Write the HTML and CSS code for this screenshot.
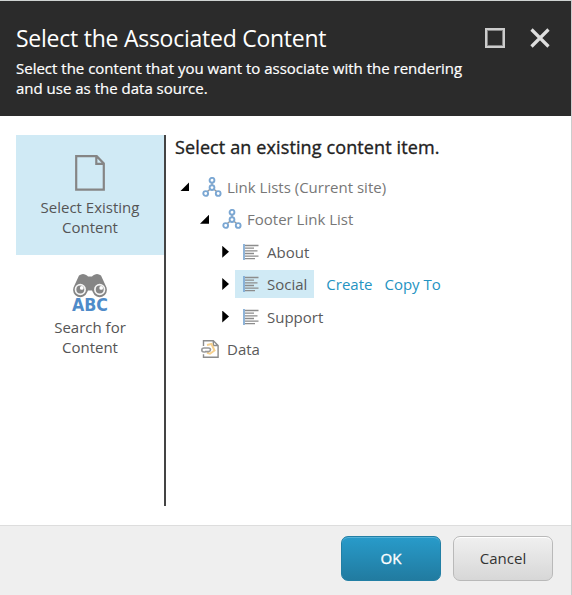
FILE: index.html
```html
<!DOCTYPE html>
<html lang="en">
<head>
<meta charset="utf-8">
<title>Select the Associated Content</title>
<link rel="stylesheet" href="styles.css">
</head>
<body>
<svg class="defs" aria-hidden="true">
  <symbol id="nodes" viewBox="0 0 20 20">
    <path d="M10 5v4M8.300 12l-3.200 2.700M11.700 12l3.200 2.700" fill="none" stroke="#999" stroke-width="1.500"/>
    <g fill="#fff" stroke="#7ba7d3" stroke-width="1.900">
      <circle cx="10" cy="3.300" r="2.400"/><circle cx="10" cy="10.600" r="2.400"/>
      <circle cx="3.700" cy="16.500" r="2.400"/><circle cx="16.200" cy="16.500" r="2.400"/>
    </g>
  </symbol>
  <symbol id="list" viewBox="0 0 16 16">
    <path d="M1 0v16" stroke="#7ba7d3" stroke-width="1.700"/>
    <path d="M2 1.500h13.500M2 4.200h9M2 6.800h12.500M2 9.500h9M2 12.100h13.500M2 14.700h10" stroke="#8c8c8c" stroke-width="1.300"/>
  </symbol>
</svg>
<div class="dialog">
  <header class="header">
    <div>
      <h1 class="title">Select the Associated Content</h1>
      <p class="subtitle">Select the content that you want to associate with the rendering<br>and use as the data source.</p>
    </div>
    <div class="controls">
      <span class="maximize"></span>
      <svg class="close" width="20" height="20" viewBox="0 0 20 20"><path d="M1.500 1.500l17 17M18.500 1.500l-17 17" stroke="#dedede" stroke-width="3.200"/></svg>
    </div>
  </header>
  <main class="body">
    <nav class="tabs">
      <div class="tab active">
        <svg width="30" height="36" viewBox="0 0 30 36"><path d="M1.200 1.200h20.500l7.100 7.300v26.100H1.200zM21.300 1.200v7.700h7.500" fill="none" stroke="#858585" stroke-width="2.200"/></svg>
        <span>Select Existing<br>Content</span>
      </div>
      <div class="tab search">
        <svg width="38" height="38" viewBox="0 0 38 38">
          <path d="M8 2.500q4-3 8 0l1 1h4l1-1q4-3 8 0l5.500 12a7 7 0 1 1-13.500 5l-1-2h-4l-1 2A7 7 0 1 1 2.500 14.500z" fill="#858585"/>
          <circle cx="9.300" cy="16.500" r="4.800" fill="#858585" stroke="#f5f5f5" stroke-width="1.700"/><circle cx="28.700" cy="16.500" r="4.800" fill="#858585" stroke="#f5f5f5" stroke-width="1.700"/>
          <circle cx="10.800" cy="14.900" r="1.900" fill="#fff"/><circle cx="30.200" cy="14.900" r="1.900" fill="#fff"/>
          <text class="abc" x="1" y="37.500" textLength="36" lengthAdjust="spacingAndGlyphs">ABC</text>
        </svg>
        <span>Search for<br>Content</span>
      </div>
    </nav>
    <section class="content">
      <h2 class="heading">Select an existing content item.</h2>
      <div class="tree">
        <div class="row"><i class="arrow open"></i><span class="item"><svg class="nodes"><use href="#nodes"/></svg>Link Lists (Current site)</span></div>
        <div class="row level1"><i class="arrow open"></i><span class="item"><svg class="nodes"><use href="#nodes"/></svg>Footer Link List</span></div>
        <div class="row level2 strong"><i class="arrow closed"></i><span class="item"><svg class="list"><use href="#list"/></svg>About</span></div>
        <div class="row level2 strong"><i class="arrow closed"></i><span class="item selected"><svg class="list"><use href="#list"/></svg>Social</span><a class="link">Create</a><a class="link">Copy To</a></div>
        <div class="row level2 strong"><i class="arrow closed"></i><span class="item"><svg class="list"><use href="#list"/></svg>Support</span></div>
        <div class="row strong"><i class="arrow"></i><span class="item"><svg class="data" viewBox="0 0 18 18"><path d="M2.500 6V.8h9.800l4.800 4.700v11.700H2.500v-3M12.300.8v4.700h4.800" fill="none" stroke="#8c8c8c" stroke-width="1.400"/><path d="M6 5l4.500-1 3 6.500-4.500 3.200-3-1" fill="none" stroke="#f6d08d" stroke-width="2"/><path d="M4.500 12H3Q.8 12 .8 10t2.200-2h4.500q2 .2 2 1.800t-2 1.800H4" fill="none" stroke="#999" stroke-width="1.600"/></svg>Data</span></div>
      </div>
    </section>
  </main>
  <footer class="footer">
    <button class="button primary">OK</button>
    <button class="button">Cancel</button>
  </footer>
</div>
</body>
</html>
```
FILE: styles.css
```css
* { box-sizing: border-box; }
body { margin: 0; font: 15px/20px "Open Sans", sans-serif; color: #555; }
.defs { display: none; }
.dialog { width: 572px; height: 595px; display: flex; flex-direction: column; background: #fff; border-top: 1px solid #cfd3d2; border-right: 1px solid #ccc; overflow: hidden; }
.header { height: 115px; flex: none; display: flex; justify-content: space-between; padding: 21px 21px 0 16px; background: #2b2b2b; color: #fff; }
.title { margin: 0; font-size: 23px; line-height: 32px; font-weight: 400; letter-spacing: -.25px; white-space: nowrap; }
.subtitle { margin: 4px 0 0; font-size: 15px; line-height: 20px; white-space: nowrap; -webkit-text-stroke: .2px; }
.controls { display: flex; gap: 25px; padding-top: 6px; }
.maximize { width: 20px; height: 20px; border: 2px solid #ccc; box-shadow: inset 0 0 0 1px #858585; }
.close { display: block; }
.body { flex: 1; display: flex; padding: 19px 16px; }
.tabs { width: 150px; height: 371px; border-right: 2px solid #444; }
.tab { height: 120px; padding-top: 20px; display: flex; flex-direction: column; align-items: center; gap: 6px; text-align: center; }
.tab svg { flex: none; overflow: visible; }
.search { padding-top: 18px; }
.active { background: #d0eaf5; }
.abc { font: bold 17px "DejaVu Sans", sans-serif; fill: #4f8bc9; }
.content { padding-left: 9px; }
.heading { margin: 0; font-size: 18px; line-height: 24px; font-weight: 400; letter-spacing: .12px; color: #222; -webkit-text-stroke: .35px; }
.tree { padding-top: 11.750px; color: #777; }
.row { height: 32.400px; display: flex; align-items: center; padding-left: 5px; }
.strong { color: #5a5a5a; }
.level1 { padding-left: 25px; }
.level2 { padding-left: 45px; }
.arrow { width: 9px; height: 9px; margin-right: 6px; }
.open { background: #000; clip-path: polygon(100% 0, 100% 100%, 0 100%); }
.closed { height: 12px; background: #000; clip-path: polygon(25% 0, 100% 50%, 25% 100%); }
.item { height: 28px; display: flex; align-items: center; padding: 0 7px 0 6px; white-space: nowrap; }
.nodes { width: 20px; height: 20px; margin: 0 5px 0 1px; }
.list { width: 16px; height: 16px; margin: 0 8px 0 2px; }
.data { width: 18px; height: 18px; margin-right: 8px; }
.selected { background: #d0eaf5; }
.link { color: #2493c2; margin-left: 12px; white-space: nowrap; }
.footer { height: 70px; flex: none; display: flex; justify-content: flex-end; gap: 12px; padding: 10px 18px; border-top: 1px solid #ddd; background: #efefef; }
.button { width: 100px; height: 45px; padding: 0 0 2px; border: 1px solid #b9b9b9; border-radius: 7px; background: linear-gradient(#f0f0f0, #d7d7d7); box-shadow: inset 0 1px #fff; color: #333; font: 15px "Open Sans", sans-serif; }
.primary { border-color: #227fa5; background: linear-gradient(#289bca, #217ba0); box-shadow: inset 0 1px #55b1d7; color: #fff; -webkit-text-stroke: .35px; }
```
